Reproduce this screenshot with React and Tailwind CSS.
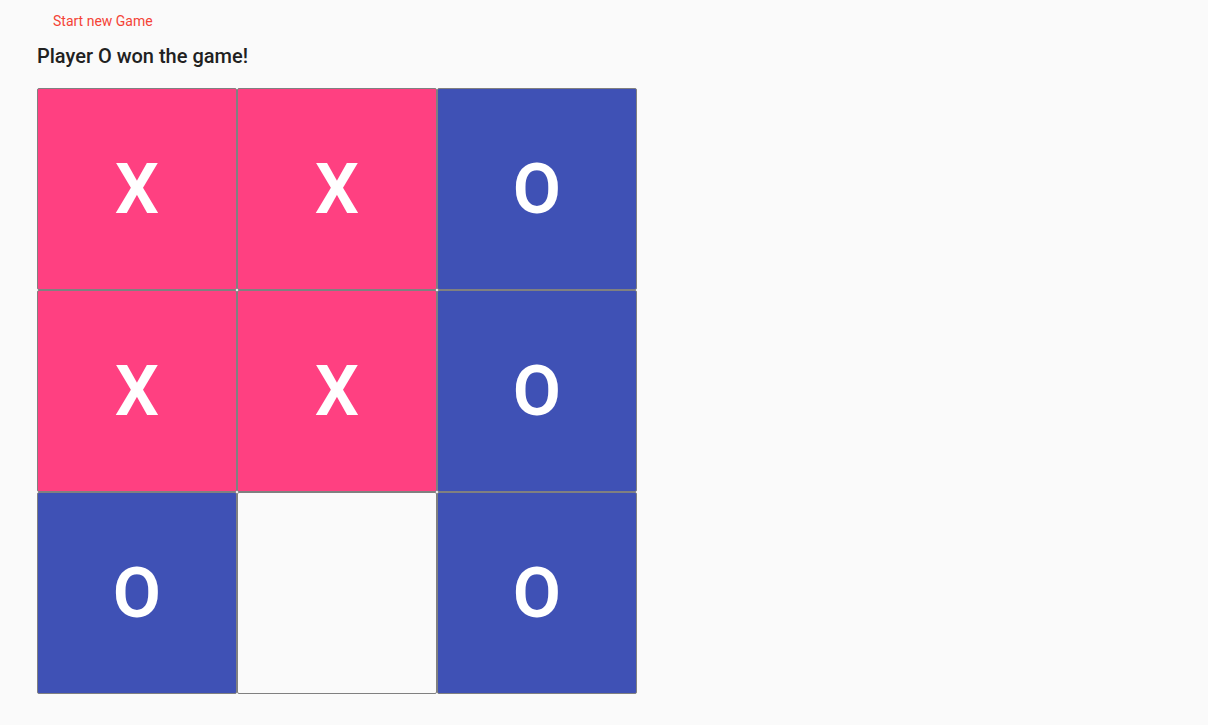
const board = ['X', 'X', 'O', 'X', 'X', 'O', 'O', '', 'O'];

const Cell = ({ value }) => {
    const color = value === 'X' ? 'bg-[#ff4081]' : value === 'O' ? 'bg-[#3f51b5]' : 'bg-[#fafafa]';
    return (
        <button
            className={`${color} h-[202px] w-[200px] border border-[#808080] rounded-[2px]
                flex items-center justify-center text-white text-[70px] font-semibold leading-none`}
        >
            {value}
        </button>
    );
};

export default function App() {
    return (
        <div className="min-h-screen bg-[#fafafa] pl-[37px] pt-[3px] font-['Roboto',sans-serif]">
            {/* Reset */}
            <button className="h-9 px-4 text-[14px] font-normal text-[#f44336] rounded">Start new Game</button>

            <h2 className="mt-[4px] text-[20px] font-medium text-[#212121] leading-[26px]">Player O won the game!</h2>

            {/* Board */}
            <div className="mt-[19px] grid grid-cols-[200px_200px_200px] w-[600px]">
                {board.map((v, i) => (
                    <Cell key={i} value={v} />
                ))}
            </div>
        </div>
    );
}
